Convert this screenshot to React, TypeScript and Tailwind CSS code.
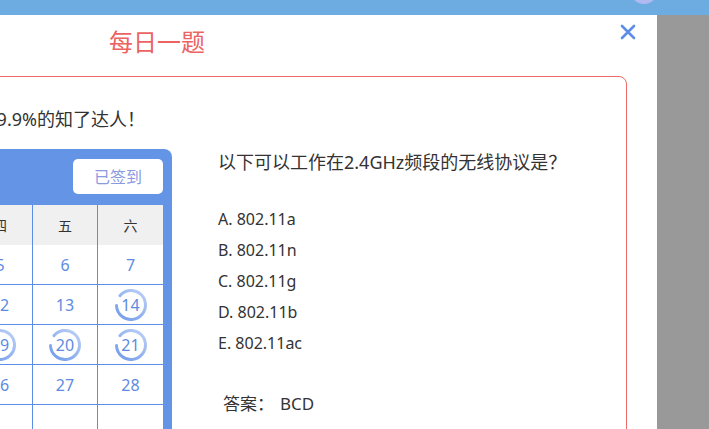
import React from "react";

const weekDays = ["日", "一", "二", "三", "四", "五", "六"];

const weeks: (number | null)[][] = [
  [1, 2, 3, 4, 5, 6, 7],
  [8, 9, 10, 11, 12, 13, 14],
  [15, 16, 17, 18, 19, 20, 21],
  [22, 23, 24, 25, 26, 27, 28],
  [29, 30, 31, null, null, null, null],
];

const signedDays = [14, 15, 16, 17, 18, 19, 20, 21];

const options = ["A. 802.11a", "B. 802.11n", "C. 802.11g", "D. 802.11b", "E. 802.11ac"];

const SignRing = () => (
  <svg
    className="absolute left-1/2 top-1/2 -translate-x-1/2 -translate-y-1/2"
    width="34"
    height="34"
    viewBox="0 0 34 34"
  >
    <defs>
      <linearGradient id="ring" x1="0" y1="0" x2="0" y2="1">
        <stop offset="0%" stopColor="#7aa2ec" />
        <stop offset="100%" stopColor="#b3c9f4" />
      </linearGradient>
    </defs>
    <circle
      cx="17"
      cy="17"
      r="14.5"
      fill="none"
      stroke="url(#ring)"
      strokeWidth="3"
      strokeDasharray="80 92"
      strokeLinecap="round"
      transform="rotate(-140 17 17)"
    />
  </svg>
);

const Calendar = () => (
  <div className="w-[473px] shrink-0 rounded-[8px] bg-[#6394e6] px-[9px] pt-[10px]">
    <div className="flex h-[35px] items-center justify-between">
      <span className="pl-2 text-[16px] text-white">2019年12月</span>
      <button className="h-[35px] w-[90px] rounded-[5px] bg-white text-[16px] text-[#8a9ae0]">
        已签到
      </button>
    </div>
    <div className="mt-[11px] bg-white">
      <div className="grid h-[40px] grid-cols-7 bg-[#f0f0f0]">
        {weekDays.map((d, i) => (
          <div
            key={d}
            className={`flex items-center justify-center text-[14px] text-[#333] ${
              i < 6 ? "border-r border-[#5b8ee6]" : ""
            }`}
          >
            {d}
          </div>
        ))}
      </div>
      {weeks.map((week, wi) => (
        <div key={wi} className="grid h-[40px] grid-cols-7 border-b border-[#5b8ee6]">
          {week.map((day, i) => (
            <div
              key={i}
              className={`relative flex items-center justify-center text-[16px] text-[#5e8be0] ${
                i < 6 ? "border-r border-[#5b8ee6]" : ""
              }`}
            >
              {day !== null && signedDays.includes(day) && <SignRing />}
              <span className="relative">{day}</span>
            </div>
          ))}
        </div>
      ))}
    </div>
  </div>
);

export default function App() {
  return (
    <div
      className="relative h-[429px] w-[709px] overflow-hidden bg-[#999999]"
      style={{ fontFamily: '"Noto Sans", "Noto Sans CJK SC", sans-serif' }}
    >
      <div className="relative h-[15px] overflow-hidden bg-[#6cace0]">
        <div className="absolute left-[630px] top-[-24px] h-[28px] w-[28px] rounded-full bg-[#b0b9f0]" />
      </div>
      <div className="flex h-[414px]">
        <div className="relative -ml-[343px] w-[1000px] shrink-0 bg-white">
          <div className="flex h-[54px] items-center justify-center text-[24px] text-[#ec6363]">
            每日一题
          </div>
          <button className="absolute right-[21px] top-[9px] text-[#5b8ee6]">
            <svg width="16" height="16" viewBox="0 0 16 16">
              <path d="M2 2L14 14M14 2L2 14" stroke="currentColor" strokeWidth="2.6" strokeLinecap="round" />
            </svg>
          </button>

          <div className="mx-[30px] mt-[7px] h-[400px] rounded-[8px] border border-[#f06a6a] pl-[11px] pt-[29px]">
            <div className="w-[446px] text-right text-[18px] leading-[26px] text-[#333]">
              恭喜你，今日答对，超过了99.9%的知了达人！
            </div>
            <div className="mt-[17px] flex">
              <Calendar />
              <div className="ml-[46px] text-[#333]">
                <div className="text-[18px] leading-[26px]">以下可以工作在2.4GHz频段的无线协议是？</div>
                <div className="mt-[29px]">
                  {options.map((o) => (
                    <div key={o} className="text-[16px] leading-[31px]">
                      {o}
                    </div>
                  ))}
                </div>
                <div className="mt-[29px] flex pl-[5px] text-[17px] leading-[31px]">
                  <span>答案：</span>
                  <span className="ml-[6px]">BCD</span>
                </div>
              </div>
            </div>
          </div>
        </div>
        <div className="flex-1 bg-[#999999]" />
      </div>
    </div>
  );
}
